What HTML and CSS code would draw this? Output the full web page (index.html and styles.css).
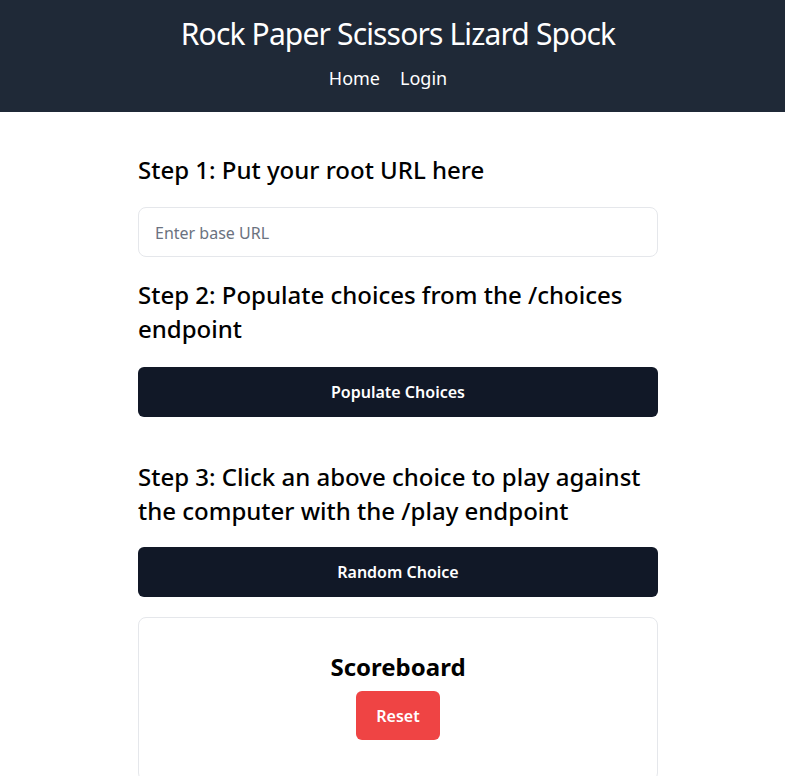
FILE: index.html
```html
<!DOCTYPE html>
<html lang="en">
<head>
<meta charset="utf-8">
<title>Rock Paper Scissors Lizard Spock</title>
<link rel="stylesheet" href="styles.css">
</head>
<body>
<header class="site-header">
  <h1 class="site-title">Rock Paper Scissors Lizard Spock</h1>
  <nav class="site-nav">
    <a href="#" class="nav-link">Home</a>
    <a href="#" class="nav-link">Login</a>
  </nav>
</header>
<main class="main">
  <h2 class="step step-1">Step 1: Put your root URL here</h2>
  <input class="url-input" type="text" placeholder="Enter base URL">
  <h2 class="step step-2">Step 2: Populate choices from the /choices endpoint</h2>
  <button class="btn btn-dark">Populate Choices</button>
  <h2 class="step step-3">Step 3: Click an above choice to play against the computer with the /play endpoint</h2>
  <button class="btn btn-dark btn-random">Random Choice</button>
  <section class="card">
    <h3 class="card-title">Scoreboard</h3>
    <button class="btn btn-red">Reset</button>
  </section>
</main>
</body>
</html>
```
FILE: styles.css
```css
* { box-sizing: border-box; }
html, body { margin: 0; padding: 0; }
body {
  font-family: "Noto Sans", "Open Sans", sans-serif;
  color: #000;
  background: #fff;
  overflow: hidden;
}
.site-header {
  background: #1f2937;
  color: #fff;
  padding: 16px 0 20px 11px;
  text-align: center;
  height: 112px;
}
.site-title {
  margin: 0;
  font-size: 30px;
  line-height: 36px;
  font-weight: 400;
  letter-spacing: -0.85px;
}
.site-nav {
  margin-top: 12px;
  display: flex;
  justify-content: center;
  font-size: 18px;
  line-height: 28px;
}
.nav-link {
  color: #fff;
  text-decoration: none;
  margin-right: 20px;
}
.main {
  width: 531px;
  padding-left: 11px;
  margin: 0 auto;
  display: flex;
  flex-direction: column;
}
.step {
  margin: 0;
  font-size: 24px;
  line-height: 34px;
  font-weight: 500;
}
.step-1 { margin-top: 41px; }
.url-input {
  margin-top: 20px;
  height: 50px;
  border: 1px solid #e5e7eb;
  border-radius: 8px;
  padding: 2px 16px 0;
  font-family: inherit;
  font-size: 16px;
  color: #111827;
  outline: none;
}
.url-input::placeholder { color: #6b7280; }
.step-2 { margin-top: 21px; }
.btn {
  border: none;
  font-family: inherit;
  font-size: 16px;
  font-weight: 600;
  color: #fff;
  cursor: pointer;
  padding-top: 1px;
}
.btn-dark {
  margin-top: 21px;
  height: 50px;
  background: #111827;
  border-radius: 6px;
}
.step-3 { margin-top: 43px; }
.btn-random { margin-top: 19px; }
.card {
  margin-top: 20px;
  border: 1px solid #e5e7eb;
  border-radius: 8px;
  padding: 33px 0 40px;
  display: flex;
  flex-direction: column;
  align-items: center;
}
.card-title {
  margin: 0;
  font-size: 24px;
  line-height: 32px;
  font-weight: 700;
}
.btn-red {
  margin-top: 8px;
  height: 49px;
  padding: 1px 20px 0;
  background: #ef4444;
  border-radius: 6px;
}
```
